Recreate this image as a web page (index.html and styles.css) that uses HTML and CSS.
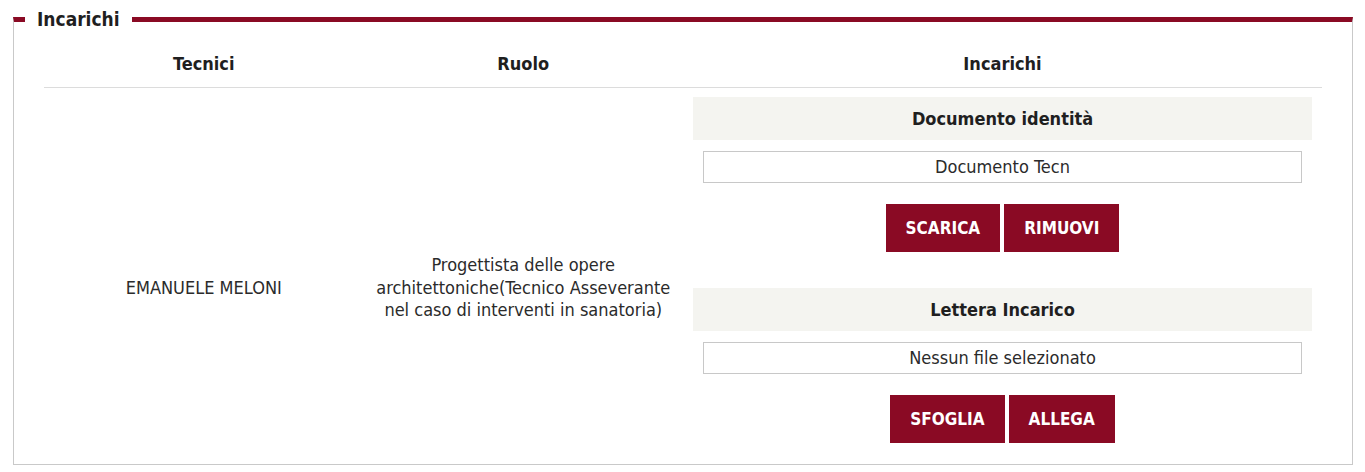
FILE: index.html
```html
<!DOCTYPE html>
<html lang="it">
<head>
<meta charset="utf-8">
<title>Incarichi</title>
<link rel="stylesheet" href="styles.css">
</head>
<body>
<fieldset class="panel">
  <legend class="panel-title">Incarichi</legend>
  <div class="panel-body">
    <table class="grid">
      <colgroup>
        <col class="c-tec">
        <col class="c-ruolo">
        <col class="c-inc">
      </colgroup>
      <thead>
        <tr>
          <th>Tecnici</th>
          <th>Ruolo</th>
          <th>Incarichi</th>
        </tr>
      </thead>
      <tbody>
        <tr>
          <td class="meta">EMANUELE MELONI</td>
          <td class="meta">Progettista delle opere architettoniche(Tecnico Asseverante nel caso di interventi in sanatoria)</td>
          <td class="docs">
            <div class="doc">
              <div class="doc-title">Documento identità</div>
              <div class="doc-file">Documento Tecn</div>
              <div class="doc-actions">
                <button class="btn" type="button">SCARICA</button>
                <button class="btn" type="button">RIMUOVI</button>
              </div>
            </div>
            <div class="doc">
              <div class="doc-title">Lettera Incarico</div>
              <div class="doc-file">Nessun file selezionato</div>
              <div class="doc-actions">
                <button class="btn" type="button">SFOGLIA</button>
                <button class="btn" type="button">ALLEGA</button>
              </div>
            </div>
          </td>
        </tr>
      </tbody>
    </table>
  </div>
</fieldset>
</body>
</html>
```

FILE: styles.css
```css
html, body {
  margin: 0;
  padding: 0;
  background: #ffffff;
}

body {
  padding-top: 7px;
  font-family: "Liberation Sans Narrow", "DejaVu Sans Condensed", "Liberation Sans", sans-serif;
  font-size: 18px;
  color: #2b2b2b;
}

.panel {
  margin: 0 12px 0 13px;
  padding: 10px 11px 11px;
  border: 1px solid #c9c9c9;
  border-top: 5px solid #8a0a24;
  min-width: 0;
}

.panel-title {
  padding: 0 12px;
  font-size: 19px;
  line-height: 24px;
  font-weight: bold;
  color: #1f1f1f;
}

.panel-body {
  padding: 0 19px;
}

.grid {
  width: 100%;
  table-layout: fixed;
  border-collapse: collapse;
}

.c-tec { width: 25%; }
.c-ruolo { width: 25%; }
.c-inc { width: 50%; }

.grid th {
  padding: 12px 10px;
  line-height: 22px;
  font-weight: bold;
  color: #1f1f1f;
  text-align: center;
  border-bottom: 1px solid #dcdcdc;
}

.grid td {
  text-align: center;
  vertical-align: middle;
  line-height: 22.5px;
}

.meta {
  padding: 45px 10px 10px;
}

.docs {
  padding: 9px 10px 10px;
}

.doc + .doc {
  margin-top: 36px;
}

.doc-title {
  padding: 10px;
  line-height: 23px;
  font-weight: bold;
  color: #1f1f1f;
  background: #f4f4f0;
}

.doc-file {
  margin: 11px 10px 0;
  border: 1px solid #c8c8c8;
  line-height: 30px;
  color: #2b2b2b;
}

.doc-actions {
  margin-top: 21px;
  display: flex;
  justify-content: center;
  gap: 4px;
}

.btn {
  height: 48px;
  padding: 0 20px;
  border: 0;
  border-radius: 0;
  background: #8a0a24;
  color: #ffffff;
  font-family: inherit;
  font-size: 17px;
  font-weight: bold;
  cursor: pointer;
}
```
